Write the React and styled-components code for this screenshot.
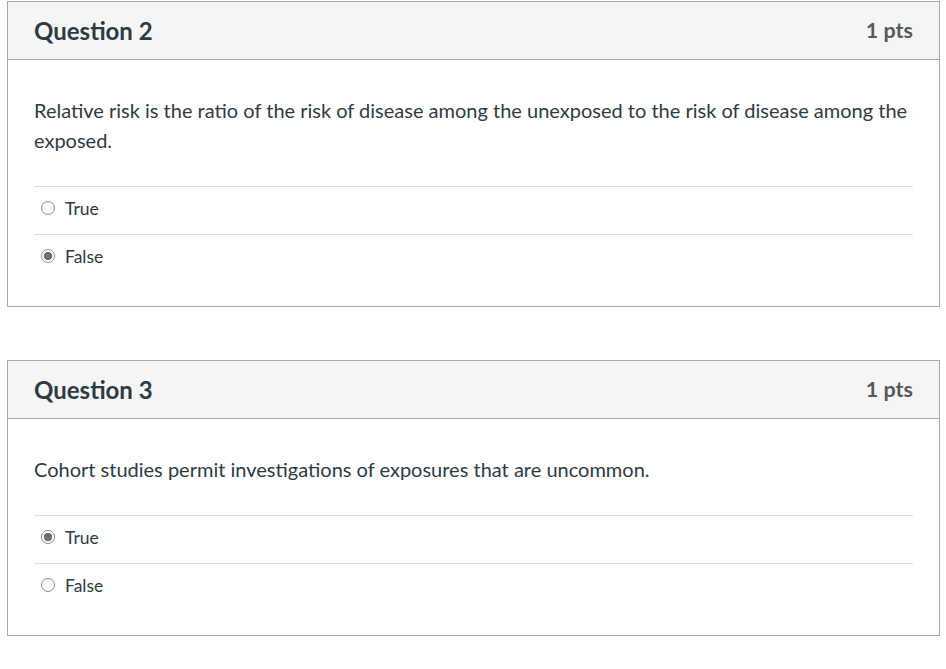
import React from 'react';
import styled, { createGlobalStyle } from 'styled-components';

const GlobalStyle = createGlobalStyle`
    body {
        margin: 0;
        background: #fff;
        font-family: Lato, "Open Sans", sans-serif;
        color: #2d3b45;
    }
`;

const questions = [
    {
        id: 2,
        text: 'Relative risk is the ratio of the risk of disease among the unexposed to the risk of disease among the exposed.',
        answer: 'False',
    },
    {
        id: 3,
        text: 'Cohort studies permit investigations of exposures that are uncommon.',
        answer: 'True',
    },
];

const App = () => {
    return (
        <Page>
            <GlobalStyle />
            {questions.map((q) => (
                <Card key={q.id}>
                    <Header>
                        <Title>Question {q.id}</Title>
                        <Points>1 pts</Points>
                    </Header>
                    <Body>
                        <Text>{q.text}</Text>
                        <Options>
                            {['True', 'False'].map((opt) => (
                                <Option key={opt}>
                                    <Radio checked={opt === q.answer} />
                                    <span>{opt}</span>
                                </Option>
                            ))}
                        </Options>
                    </Body>
                </Card>
            ))}
        </Page>
    );
};

export default App;

// Styled Components

const Page = styled.div`
    display: flex;
    flex-direction: column;
    gap: 53px;
    padding: 1px 6px 0 7px;
`;

const Card = styled.div`
    border: 1px solid #a8a8a8;
    background: #fff;
`;

const Header = styled.div`
    display: flex;
    align-items: center;
    justify-content: space-between;
    height: 58px;
    box-sizing: border-box;
    padding: 0 26px 1px;
    background: #f5f5f5;
    border-bottom: 1px solid #a8a8a8;
`;

const Title = styled.h2`
    margin: 0;
    font-size: 24px;
    font-weight: 700;
    color: #2d3b45;
`;

const Points = styled.div`
    font-size: 21.5px;
    font-weight: 700;
    color: #555a5e;
`;

const Body = styled.div`
    padding: 35px 26px 24px;
`;

const Text = styled.p`
    margin: 0 0 31px;
    font-size: 20px;
    line-height: 30px;
    color: #2d3b45;
`;

const Options = styled.div`
    display: flex;
    flex-direction: column;
`;

const Option = styled.label`
    display: flex;
    align-items: center;
    gap: 10px;
    height: 48px;
    box-sizing: border-box;
    padding: 0 0 5px 7px;
    border-top: 1px solid #dcdcdc;
    font-size: 17.5px;
    color: #2d3b45;
`;

const Radio = styled.span`
    box-sizing: border-box;
    width: 14px;
    height: 14px;
    border-radius: 50%;
    border: 1px solid #8a8a8a;
    background: ${(p) => (p.checked ? 'radial-gradient(circle, #707070 0 4px, #fff 4.5px)' : '#fff')};
`;
